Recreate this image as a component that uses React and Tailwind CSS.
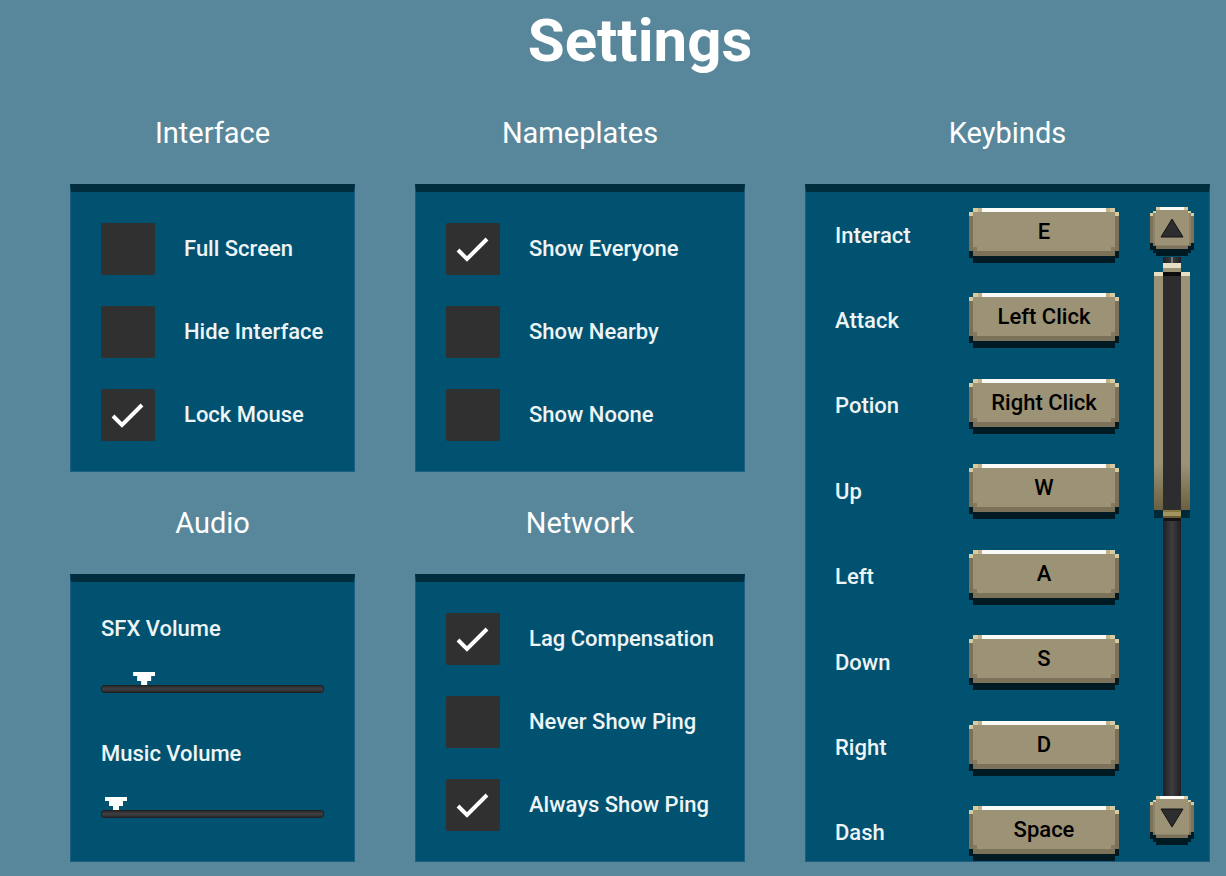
import { useState } from 'react'

const INTERFACE = [
  { id: 'fullScreen', label: 'Full Screen' },
  { id: 'hideInterface', label: 'Hide Interface' },
  { id: 'lockMouse', label: 'Lock Mouse' },
]

const NAMEPLATES = [
  { id: 'showEveryone', label: 'Show Everyone' },
  { id: 'showNearby', label: 'Show Nearby' },
  { id: 'showNoone', label: 'Show Noone' },
]

const NETWORK = [
  { id: 'lagCompensation', label: 'Lag Compensation' },
  { id: 'neverShowPing', label: 'Never Show Ping' },
  { id: 'alwaysShowPing', label: 'Always Show Ping' },
]

const KEYBINDS = [
  { action: 'Interact', key: 'E' },
  { action: 'Attack', key: 'Left Click' },
  { action: 'Potion', key: 'Right Click' },
  { action: 'Up', key: 'W' },
  { action: 'Left', key: 'A' },
  { action: 'Down', key: 'S' },
  { action: 'Right', key: 'D' },
  { action: 'Dash', key: 'Space' },
]

const LABEL_CLASS = 'text-[22px] leading-[26px] font-medium whitespace-nowrap text-[#eef4f6]'

function Section({ title, className = '', children }) {
  return (
    <section className={`flex min-w-0 flex-col ${className}`}>
      <h2 className="flex h-[102px] items-center justify-center text-[29px] leading-10">{title}</h2>
      <div className="flex flex-1 flex-col border border-t-8 border-[#1b6080] border-t-[#002e3f] bg-[#005270]">
        {children}
      </div>
    </section>
  )
}

function CheckList({ items, values, onToggle }) {
  return (
    <div className="flex flex-col gap-[31px] px-[30px] pt-[31px] pb-[30px]">
      {items.map(({ id, label }) => (
        <div key={id} className="flex items-center gap-[29px]">
          <div className="relative h-[52px] w-[54px] shrink-0">
            <input
              id={id}
              type="checkbox"
              checked={!!values[id]}
              onChange={() => onToggle(id)}
              className="peer block h-full w-full appearance-none rounded-[2px] bg-[#303030]"
            />
            <svg
              viewBox="0 0 54 52"
              className="pointer-events-none absolute inset-0 hidden peer-checked:block"
              fill="none"
              stroke="#fff"
              strokeWidth="4"
            >
              <path d="M12 27L21 36L41 16" />
            </svg>
          </div>
          <label htmlFor={id} className={LABEL_CLASS}>{label}</label>
        </div>
      ))}
    </div>
  )
}

function Volume({ id, label, value, onChange }) {
  return (
    <div className="flex flex-col">
      <label htmlFor={id} className={`mb-[30px] ${LABEL_CLASS}`}>{label}</label>
      <input
        id={id}
        type="range"
        min="0"
        max="100"
        value={value}
        onChange={e => onChange(Number(e.target.value))}
        className="block h-[13px] w-full appearance-none bg-transparent [&::-webkit-slider-thumb]:h-[13px] [&::-webkit-slider-thumb]:w-[22px] [&::-webkit-slider-thumb]:appearance-none [&::-webkit-slider-thumb]:bg-white [&::-webkit-slider-thumb]:[clip-path:polygon(0_0,22px_0,22px_4px,18px_4px,18px_9px,14px_9px,14px_13px,8px_13px,8px_9px,4px_9px,4px_4px,0_4px)]"
      />
      <div className="h-2 rounded-[3px] border border-[#202022] bg-linear-to-b from-[#2a2a2c] via-[#404042] to-[#2a2a2c]" />
    </div>
  )
}

function KeyButton({ children, ...props }) {
  return (
    <button type="button" className="relative h-[55px] w-[150px] shrink-0 pb-[7px] text-[22px] leading-[26px] font-medium text-black" {...props}>
      <svg viewBox="0 0 150 55" preserveAspectRatio="none" shapeRendering="crispEdges" className="absolute inset-0 h-full w-full">
        <path fill="#001a24" d="M0 43h150v7h-4v5H4v-5H0z" />
        <path fill="#7c7259" d="M0 8h150v35h-4v5H4v-5H0z" />
        <path fill="#9c9276" d="M4 4h142v35h-4v4H8v-4H4z" />
        <path fill="#857b60" d="M4 39h4v4H4zM142 39h4v4h-4z" />
        <path fill="#d8cba2" d="M0 4h4v4H0zM146 4h4v4h-4zM4 0h5v4H4zM141 0h5v4h-5z" />
        <path fill="#bfb08a" d="M9 0h4v4H9zM137 0h4v4h-4z" />
        <path fill="#fafaf6" d="M13 0h124v4H13z" />
      </svg>
      <span className="relative">{children}</span>
    </button>
  )
}

function ArrowButton({ label, arrow }) {
  return (
    <button type="button" aria-label={label} className="h-[50px] w-11 shrink-0">
      <svg viewBox="0 0 44 50" className="block h-full w-full">
        <g shapeRendering="crispEdges">
          <path fill="#001a24" d="M0 36h44v7h-3v3h-3v3H6v-3H3v-3H0z" />
          <path fill="#7c7259" d="M0 9h44v27h-3v3h-3v3H6v-3H3v-3H0z" />
          <path fill="#8d8368" d="M3 6h38v30h-3v3H6v-3H3z" />
          <path fill="#9c9276" d="M6 3h32v3h1v32H5V6h1z" />
          <path fill="#d8cba2" d="M0 6h3v3H0zM41 6h3v3h-3zM3 4h3v2H3zM38 4h3v2h-3zM6 0h4v3H6zM34 0h4v3h-4z" />
          <path fill="#fafaf6" d="M10 0h24v3H10z" />
        </g>
        <path fill="#2d2d30" stroke="#151517" strokeWidth="1" d={arrow} />
      </svg>
    </button>
  )
}

function ScrollBar() {
  return (
    <div className="flex w-11 shrink-0 flex-col items-center">
      <ArrowButton label="Scroll up" arrow="M22 12L33 30H11z" />
      <div className="relative w-[18px] flex-1 bg-linear-to-r from-[#202023] via-[#3e3e40] to-[#202023]">
        {/* thumb */}
        <div className="absolute top-0 -left-[9px] flex w-9 flex-col items-center">
          <div className="h-[6px] w-[2px] bg-[#77777a]" />
          <div className="h-[5px] w-[18px] bg-[#e6dfc5]" />
          <div className="h-1 w-[18px] bg-[#9c9276]" />
          <div className="flex h-[238px] w-full">
            <div className="flex-1 border-t-4 border-[#e6dfc5] bg-linear-to-b from-[#9c9276] from-80% to-[#6b6140]" />
            <div className="w-[18px] border-t-4 border-[#0c0c0d] bg-[#2d2d30]" />
            <div className="flex-1 border-t-4 border-[#e6dfc5] bg-linear-to-b from-[#9c9276] from-80% to-[#6b6140]" />
          </div>
          <div className="flex h-2 w-full bg-[#012a38]">
            <div className="mx-auto w-[18px] border-y-2 border-t-[#857843] border-b-[#665b35] bg-[#a39561]" />
          </div>
          <div className="h-[3px] w-[18px] bg-[#141416]" />
        </div>
      </div>
      <ArrowButton label="Scroll down" arrow="M22 31L33 13H11z" />
    </div>
  )
}

export default function App() {
  const [checks, setChecks] = useState({
    lockMouse: true,
    showEveryone: true,
    lagCompensation: true,
    alwaysShowPing: true,
  })
  const [sfx, setSfx]     = useState(16)
  const [music, setMusic] = useState(2)

  function toggle(id) { setChecks(p => ({ ...p, [id]: !p[id] })) }

  return (
    <main className="min-h-screen bg-[#58879b] pr-4 pb-3.5 pl-[70px] font-[Roboto,sans-serif] text-white">
      <h1 className="h-[82px] text-center text-[60px] leading-[82px] font-bold">Settings</h1>

      <div className="grid grid-cols-[285fr_330fr_405fr] gap-x-[60px]">
        <Section title="Interface">
          <CheckList items={INTERFACE} values={checks} onToggle={toggle} />
        </Section>

        <Section title="Nameplates">
          <CheckList items={NAMEPLATES} values={checks} onToggle={toggle} />
        </Section>

        <Section title="Keybinds" className="row-span-2">
          <div className="flex flex-1 pr-[15px] pl-[29px]">
            <ul className="flex flex-1 flex-col justify-between pt-4">
              {KEYBINDS.map(({ action, key }) => (
                <li key={action} className="flex items-center justify-between">
                  <span className={LABEL_CLASS}>{action}</span>
                  <KeyButton aria-label={`${action}: ${key}`}>{key}</KeyButton>
                </li>
              ))}
            </ul>
            <div className="ml-[31px] flex pt-[15px] pb-[15px]">
              <ScrollBar />
            </div>
          </div>
        </Section>

        <Section title="Audio">
          <div className="flex flex-col gap-12 px-[30px] pt-[34px]">
            <Volume id="sfx" label="SFX Volume" value={sfx} onChange={setSfx} />
            <Volume id="music" label="Music Volume" value={music} onChange={setMusic} />
          </div>
        </Section>

        <Section title="Network">
          <CheckList items={NETWORK} values={checks} onToggle={toggle} />
        </Section>
      </div>
    </main>
  )
}
